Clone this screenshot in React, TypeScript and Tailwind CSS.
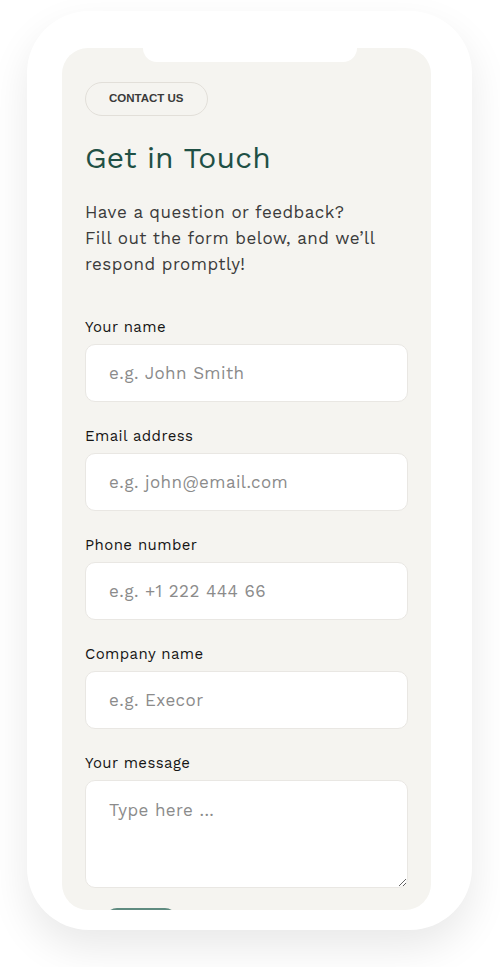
import React from 'react'

const FONT = "font-['Work_Sans','Inter','Open_Sans',sans-serif]"

const fields = [
  { label: 'Your name', placeholder: 'e.g. John Smith' },
  { label: 'Email address', placeholder: 'e.g. john@email.com' },
  { label: 'Phone number', placeholder: 'e.g. +1 222 444 66' },
  { label: 'Company name', placeholder: 'e.g. Execor' },
]

export default function App() {
  return (
    <div className={`min-h-screen w-[500px] bg-white pt-[11px] ${FONT}`}>
      <div className="ml-[27px] h-[919px] w-[445px] rounded-[62px] bg-white pl-[35px] pr-[41px] pt-[37px] pb-[20px] shadow-[0_18px_40px_rgba(0,0,0,0.09)]">
        <div className="relative h-full overflow-hidden rounded-[26px] bg-[#f5f4f0] px-[23px] pt-[34px]">
          {/* notch */}
          <div className="absolute left-[81px] top-0 h-[14px] w-[214px] rounded-b-[16px] bg-white" />

          <div className="inline-flex h-[34px] items-center rounded-full border border-[#e2dfd9] px-[23px] font-['Liberation_Sans',sans-serif] text-[11.5px] font-bold text-[#3a3a3a]">
            CONTACT US
          </div>

          <h1 className="mt-[24px] text-[30px] font-normal leading-[36px] tracking-[0.15px] text-[#1f5045]">Get in Touch</h1>

          <p className="mt-[23px] text-[17px] leading-[26px] tracking-[0.45px] text-[#3b3b3b]">
            Have a question or feedback?
            <br />
            Fill out the form below, and we’ll respond promptly!
          </p>

          <form className="mt-[40px] flex flex-col gap-[24px]">
            {fields.map(f => (
              <label key={f.label} className="flex flex-col">
                <span className="text-[15px] leading-[20px] tracking-[0.4px] text-[#151515]">{f.label}</span>
                <input
                  placeholder={f.placeholder}
                  className="mt-[7px] h-[58px] rounded-[10px] border border-[#e9e7e3] bg-white px-[23px] text-[17px] tracking-[0.4px] text-[#222] outline-none placeholder:text-[#8b8b8b]"
                />
              </label>
            ))}
            <label className="flex flex-col">
              <span className="text-[15px] leading-[20px] tracking-[0.4px] text-[#151515]">Your message</span>
              <textarea
                placeholder="Type here ..."
                className="mt-[7px] h-[108px] rounded-[10px] border border-[#e9e7e3] bg-white px-[23px] py-[17px] text-[17px] tracking-[0.4px] text-[#222] outline-none placeholder:text-[#8b8b8b]"
              />
            </label>
          </form>

          <button className="ml-[20px] mt-[20px] h-[44px] w-[72px] rounded-t-[12px] bg-[#5f8b80]" />
        </div>
      </div>
    </div>
  )
}
